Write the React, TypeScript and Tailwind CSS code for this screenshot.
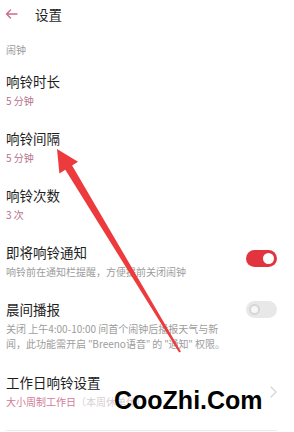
import React from 'react';

const font = { fontFamily: '"Noto Sans CJK SC", "Noto Sans", sans-serif' };

function Toggle({ on }: { on: boolean }) {
  return on ? (
    <div className="w-[31px] h-[17px] rounded-full bg-[#e2343f] flex items-center justify-end pr-[3px]">
      <div className="w-[11px] h-[11px] rounded-full bg-white" />
    </div>
  ) : (
    <div className="w-[31px] h-[17px] rounded-full bg-[#e8e8e8] flex items-center pl-[3px]">
      <div className="w-[11px] h-[11px] rounded-full bg-[#f7f7f7] border-[2px] border-[#d6d6d6]" />
    </div>
  );
}

interface ItemProps {
  title: string;
  sub: React.ReactNode;
  subClass?: string;
  right?: React.ReactNode;
}

function Item({ title, sub, subClass = 'text-[#b4708a]', right }: ItemProps) {
  return (
    <div className="flex items-center justify-between pl-[6px] pr-[17px] py-[11px]">
      <div className="flex-1">
        <p className="text-[13.5px] leading-[16px] text-[#1e1e1e]">{title}</p>
        <p className={`mt-[4px] text-[10px] leading-[15px] ${subClass}`}>{sub}</p>
      </div>
      {right}
    </div>
  );
}

export default function App() {
  return (
    <div className="relative w-[294px] h-[432px] bg-white overflow-hidden" style={font}>
      {/* Header */}
      <div className="h-[28px] flex items-center pl-[5px]">
        <svg width="13" height="10" viewBox="0 0 13 10" fill="none" stroke="#c96e87" strokeWidth="1.4" strokeLinecap="round" strokeLinejoin="round">
          <path d="M12 5H1.5M5.5 1L1.5 5L5.5 9" />
        </svg>
        <span className="ml-[17px] text-[13.5px] text-[#1e1e1e]">设置</span>
      </div>

      <p className="mt-[15px] pl-[6px] text-[10px] leading-[14px] text-[#9a9a9a]">闹钟</p>

      <div className="mt-[5px]">
        <Item title="响铃时长" sub="5 分钟" />
        <Item title="响铃间隔" sub="5 分钟" />
        <Item title="响铃次数" sub="3 次" />
        <Item
          title="即将响铃通知"
          sub="响铃前在通知栏提醒，方便提前关闭闹钟"
          subClass="text-[#9c9c9c]"
          right={<div className="self-start mt-[6px]"><Toggle on /></div>}
        />
        <Item
          title="晨间播报"
          sub={
            <span className="block whitespace-nowrap">
              关闭 上午4:00-10:00 间首个闹钟后播报天气与新
              <br />
              闻，此功能需开启 <span style={{ fontFamily: '"Noto Sans", sans-serif' }}>"</span>Breeno语音<span style={{ fontFamily: '"Noto Sans", sans-serif' }}>"</span> 的 <span style={{ fontFamily: '"Noto Sans", sans-serif' }}>"</span>通知<span style={{ fontFamily: '"Noto Sans", sans-serif' }}>"</span> 权限。
            </span>
          }
          subClass="text-[#9c9c9c]"
          right={<div className="self-start"><Toggle on={false} /></div>}
        />
        <Item
          title="工作日响铃设置"
          sub={<>大小周制工作日<span className="text-[#d8d0d3]">（本周休单休）</span></>}
          subClass="text-[#d17a97]"
          right={
            <svg width="7" height="12" viewBox="0 0 7 12" fill="none" stroke="#d4d4d4" strokeWidth="1.2" strokeLinecap="round" strokeLinejoin="round">
              <path d="M1 1L6 6L1 11" />
            </svg>
          }
        />
        <div className="mt-[10px] ml-[6px] mr-[17px] h-px bg-[#ececec]" />
      </div>

      {/* Annotation arrow */}
      <svg className="absolute left-0 top-0 pointer-events-none" width="294" height="432" viewBox="0 0 294 432">
        <polygon
          points="57,149 78,161.7 72.1,165.5 180.9,351.5 179.1,352.5 65.3,169.7 59.4,173.5"
          fill="#ec3a3d"
        />
      </svg>

      {/* Watermark */}
      <span
        className="absolute left-[114px] top-[388px] text-[25px] font-bold text-black leading-none"
        style={{ fontFamily: '"Liberation Sans", Arial, sans-serif' }}
      >
        CooZhi.Com
      </span>
    </div>
  );
}
